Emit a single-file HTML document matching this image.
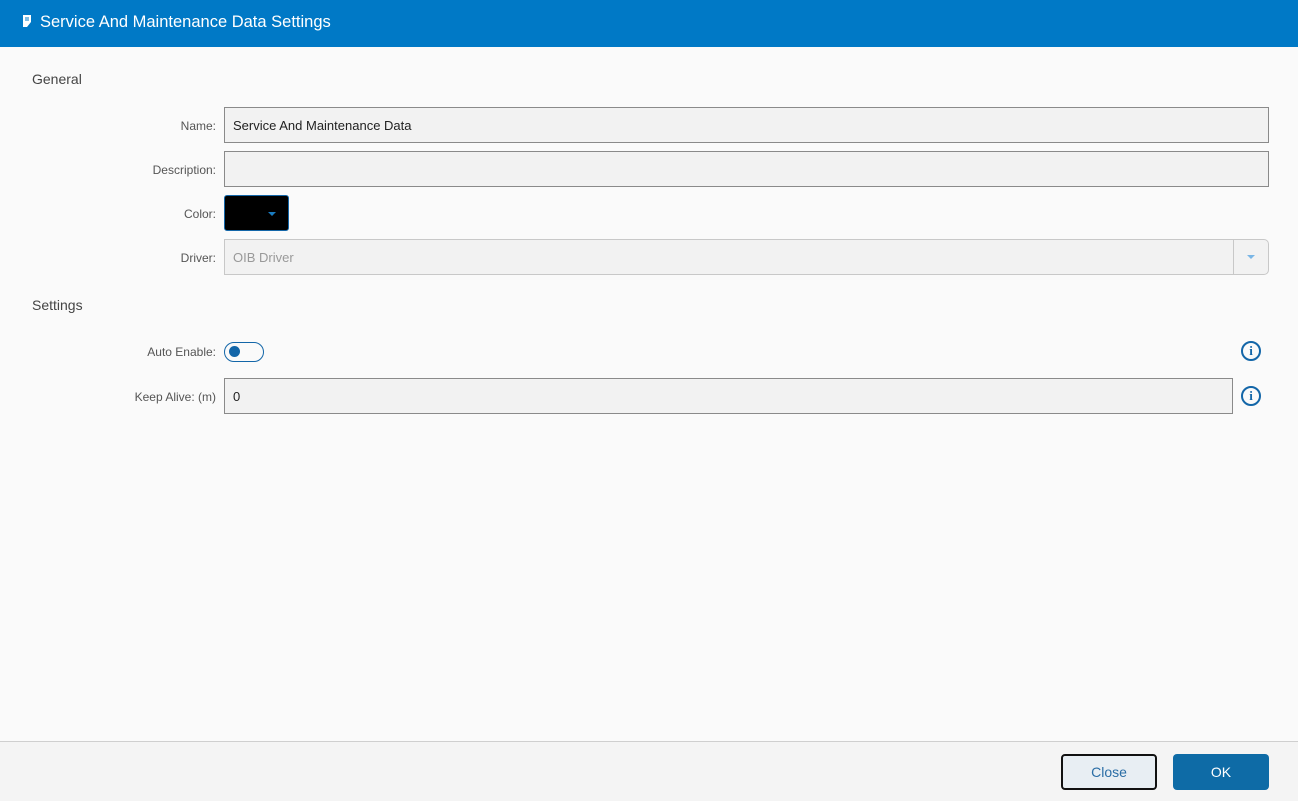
<!DOCTYPE html>
<html><head><style>
*{box-sizing:border-box;margin:0;padding:0}
body{width:1298px;height:801px;background:#fafafa;font-family:"Liberation Sans",sans-serif;position:relative;overflow:hidden}
.hdr{position:absolute;left:0;top:0;width:1298px;height:47px;background:#0079c6;color:#fff;font-size:16.5px}
.hdr span{position:absolute;left:40px;top:13px}
.sec{position:absolute;left:32px;font-size:14px;color:#444}
.lbl{position:absolute;right:1082px;font-size:12px;color:#555;text-align:right}
.inp{position:absolute;left:224px;height:36px;border:1px solid #8a8a8a;background:#f2f2f2;font-size:13px;padding:10px 8px;color:#222}
.info{position:absolute;left:1241px;width:20px;height:20px;border:2px solid #1366a8;border-radius:50%;color:#1366a8;font:bold 13px "Liberation Serif",serif;text-align:center;line-height:16px}
.ftr{position:absolute;left:0;top:741px;width:1298px;height:60px;background:#f4f4f4;border-top:1px solid #cfcfcf}
.btn{position:absolute;top:12px;height:36px;width:96px;border-radius:4px;font-size:14px;text-align:center;line-height:34px}
</style></head><body>
<div class="hdr"><svg style="position:absolute;left:23px;top:15px" width="8" height="12"><path d="M0 0h8v7l-4 5H0z" fill="#fff"/><path d="M2 3h4M2 5h4" stroke="#0079c6" stroke-width="1"/></svg><span>Service And Maintenance Data Settings</span></div>
<div class="sec" style="top:71px">General</div>
<div class="lbl" style="top:119px">Name:</div>
<div class="inp" style="top:107px;width:1045px">Service And Maintenance Data</div>
<div class="lbl" style="top:163px">Description:</div>
<div class="inp" style="top:151px;width:1045px"></div>
<div class="lbl" style="top:207px">Color:</div>
<div style="position:absolute;left:224px;top:195px;width:65px;height:36px;background:#000;border:1px solid #1366a8;border-radius:3px"><div style="position:absolute;left:43px;top:16px;border:4px solid transparent;border-top:4px solid #1a7cc1;border-bottom:0"></div></div>
<div class="lbl" style="top:251px">Driver:</div>
<div class="inp" style="top:239px;width:1045px;border-color:#c8c8c8;border-radius:0 5px 5px 0;color:#999">OIB Driver<div style="position:absolute;right:0;top:0;width:35px;height:34px;border-left:1px solid #c8c8c8"><div style="position:absolute;left:13px;top:15px;border:4px solid transparent;border-top:4px solid #7ab6e6;border-bottom:0"></div></div></div>
<div class="sec" style="top:297px">Settings</div>
<div class="lbl" style="top:345px">Auto Enable:</div>
<div style="position:absolute;left:224px;top:342px;width:40px;height:20px;border:1.5px solid #1366a8;border-radius:10px"><div style="position:absolute;left:4px;top:3px;width:11px;height:11px;border-radius:50%;background:#1366a8"></div></div>
<div class="info" style="top:341px">i</div>
<div class="lbl" style="top:390px">Keep Alive: (m)</div>
<div class="inp" style="top:378px;width:1009px">0</div>
<div class="info" style="top:386px">i</div>
<div class="ftr">
<div class="btn" style="left:1061px;background:#e8eef3;border:2px solid #111;color:#2a6da5;line-height:32px">Close</div>
<div class="btn" style="left:1173px;background:#0e6ba6;color:#fff;line-height:36px">OK</div>
</div>
</body></html>
